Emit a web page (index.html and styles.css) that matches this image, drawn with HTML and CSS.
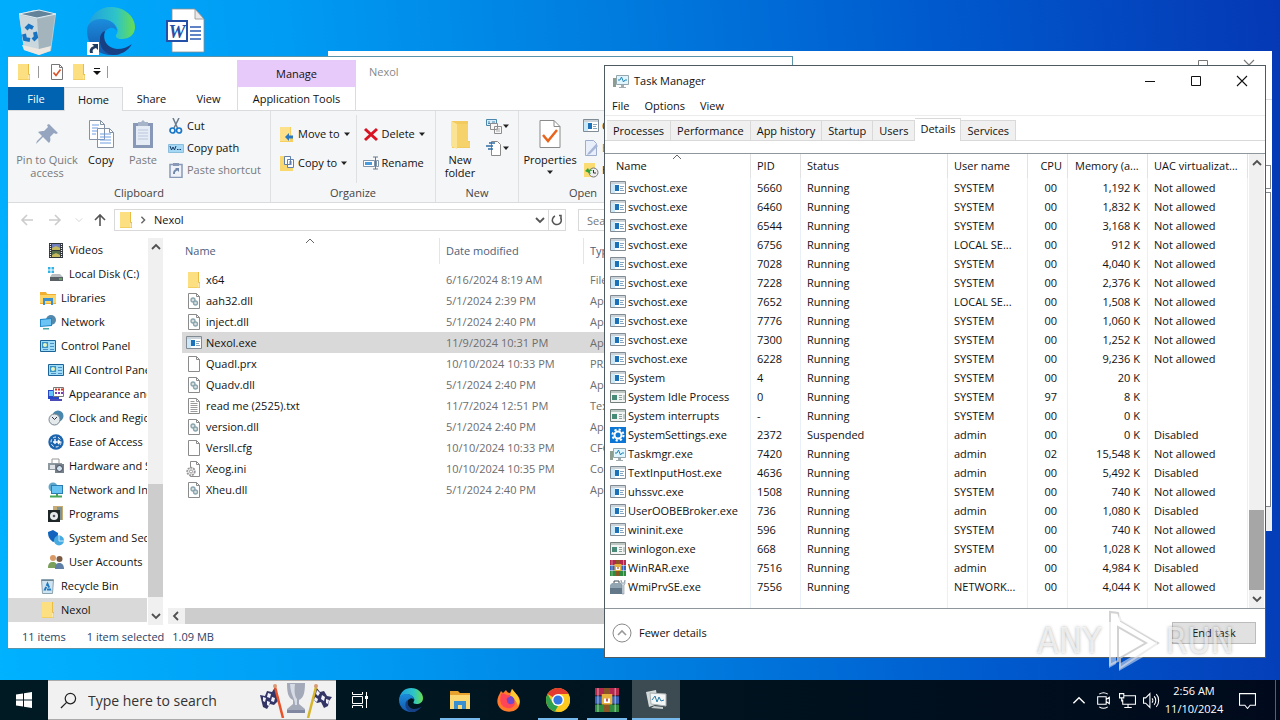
FILE: index.html
```html
<!DOCTYPE html>
<html lang="en">
<head>
    <meta charset="UTF-8">
    <meta name="viewport" content="width=device-width, initial-scale=1.0">
    <title>Desktop</title>
    <link rel="stylesheet" href="styles.css">
</head>
<body>
    <!-- icon sprite -->
    <svg class="sprite" aria-hidden="true">
        <symbol id="i-folder" viewBox="0 0 16 16"><path d="M2 0h11v10h1v6H2z" fill="#e9bd45"/><path d="M2 0h10v15.500H2z" fill="#fcdf80"/><path d="M12 10.500l1.500 1v4H12z" fill="#fbe9ac"/></symbol>
        <symbol id="i-bigfolder" viewBox="0 0 24 30"><path d="M4 2h16v20h2v7H4z" fill="#f3ca5e"/><path d="M3 2l6 3v25l-6-3z" fill="#fbe394"/><path d="M9 5h11v18l2 1v4H9z" fill="#f6d26b"/></symbol>
        <symbol id="i-check" viewBox="0 0 16 16"><path d="M2.500.5h8l3 3v12h-11z" fill="#fff" stroke="#777"/><path d="M10.500.5v3h3" fill="none" stroke="#777"/><path d="M4.500 8.500l2.500 3 4.500-6" fill="none" stroke="#d9532c" stroke-width="1.700"/></symbol>
        <symbol id="i-bigcheck" viewBox="0 0 24 30"><path d="M2 1.500h14l6 6v21H2z" fill="#fff" stroke="#8a8a8a"/><path d="M16 1.500v6h6" fill="none" stroke="#8a8a8a"/><path d="M5 16l5 6 9-11" fill="none" stroke="#e8641b" stroke-width="2.500"/></symbol>
        <symbol id="i-pin" viewBox="0 0 24 30"><path d="M14 5l9 9-2 1-2-1-4 4c1 3 0 5-1 6l-6-6-6 6-1 1 1-3 5-5-4-4c2-1 4-1 6-1l4-4-1-2z" fill="#95a5bf"/></symbol>
        <symbol id="i-copy" viewBox="0 0 28 30"><g fill="#fff" stroke="#8492a6"><path d="M2.500 1.500h11l4 4v15h-15zM10.500 9.500h12l4 4v15h-16z"/><path d="M13.500 1.500v4h4M22.500 9.500v4h4" fill="none"/></g><path d="M5 6h7M5 9h6M5 12h5M5 15h4M13 15h11M13 18h11M13 21h11M13 24h11" stroke="#6f9de0"/></symbol>
        <symbol id="i-paste" viewBox="0 0 24 30"><path d="M2 4h20v25H2z" fill="#8899b8"/><path d="M5 7h14v19H5z" fill="#e6ecf5"/><path d="M7 3h3l2-2 2 2h3v4H7z" fill="#a6b3c9"/><path d="M7 11h10M7 14h10M7 17h10M7 20h10" stroke="#b8c6dc"/></symbol>
        <symbol id="i-cut" viewBox="0 0 16 16"><path d="M5 0l4.500 10M11 0L6 10" stroke="#6b7c8e" stroke-width="1.500"/><circle cx="4.500" cy="12.500" r="2.500" fill="none" stroke="#1977c9" stroke-width="1.700"/><circle cx="11" cy="12.500" r="2.500" fill="none" stroke="#1977c9" stroke-width="1.700"/></symbol>
        <symbol id="i-path" viewBox="0 0 16 16"><path d="M.5 4.500h15v8H.5z" fill="#a5d8f5" stroke="#8bbedd"/><path d="M2 6l1.500 4L5 7l1.500 3L8 6M9 9.500h1.500M11.500 9.500H13" fill="none" stroke="#163b66"/></symbol>
        <symbol id="i-shortcut" viewBox="0 0 16 16"><path d="M2 2.500h12v13H2z" fill="#eef2f8" stroke="#8899b8" stroke-width="1.500"/><path d="M5 1h6v3H5z" fill="#8899b8"/><path d="M5 12c0-3 1-4 3-5L7 6h4v4l-1.500-1.500C7 9.500 7 10 7 12z" fill="#7186ab"/></symbol>
        <symbol id="i-move" viewBox="0 0 16 16"><path d="M1 1h11v10h2v5H1z" fill="#f6cf5f"/><path d="M1 1h10v14H1z" fill="#fce08a"/><path d="M6 11l4-4v2.500h4v3h-4V15z" fill="#2a78c2"/></symbol>
        <symbol id="i-copyto" viewBox="0 0 16 16"><path d="M1 1h11v10h2v5H1z" fill="#f9d96f"/><path d="M5.500 1.500h6v8h-6zM8.500 4.500h6v8h-6z" fill="#fff" stroke="#5f7fae"/><path d="M10 7h3M10 9h3" stroke="#5f7fae"/></symbol>
        <symbol id="i-delete" viewBox="0 0 16 16"><path d="M2 3l12 11M14 3L2 14" stroke="#d81324" stroke-width="3"/></symbol>
        <symbol id="i-rename" viewBox="0 0 16 16"><path d="M.5 5.500h11v6H.5zM13.500 5.500h2v6h-2z" fill="#fff" stroke="#8094aa"/><path d="M2 7h7v3H2z" fill="#4a9bdc"/><path d="M10 2h5M12.500 2v12M10 14h5" stroke="#66788c"/></symbol>
        <symbol id="i-newitem" viewBox="0 0 16 16"><path d="M.5 1.500h10v6H.5z" fill="#d9edfa" stroke="#4b86ad"/><path d="M2 4h2M6 4h3M2 5.500h7" stroke="#4b86ad"/><path d="M4.500 5.500h7v6h-7zM8.500 8.500h7v7h-7z" fill="#f7f7f7" stroke="#8d8d8d"/><path d="M10 11h4M10 13h4" stroke="#aaa"/></symbol>
        <symbol id="i-easy" viewBox="0 0 16 16"><path d="M5.500 1.500h6l3 3v11h-9z" fill="#fff" stroke="#8a8a8a"/><path d="M3 3h6M0 6h7M2 9h5" stroke="#2e6ea5" stroke-width="1.500"/></symbol>
        <symbol id="i-edit" viewBox="0 0 16 16"><path d="M2.500.5h8l3 3v12h-11z" fill="#e8eefa" stroke="#9fadcc"/><path d="M5 13l8-9 2 2-8 8-3 1z" fill="#a7b6d7"/></symbol>
        <symbol id="i-history" viewBox="0 0 16 16"><path d="M1 1h11v14H1z" fill="#fbdc73"/><circle cx="10.500" cy="10.500" r="4.500" fill="#eee" stroke="#777"/><path d="M10.500 8v3h2.500" fill="none" stroke="#333"/><path d="M2 9l3-3 1 2c2-1 3 0 4 1-2-.5-3 0-3 1l1 2z" fill="#36a23a"/></symbol>
        <symbol id="i-exe" viewBox="0 0 16 16"><path d="M.5 1.500h15v12H.5z" fill="#fff" stroke="#808b93"/><path d="M1 2h14v2H1z" fill="#cdd4d9"/><path d="M1 4h4v9H1z" fill="#cbe8f9"/><path d="M5 5h4v6H5z" fill="#1c72b8"/><path d="M10 6.500h4M10 8.500h3M10 10.500h4" stroke="#86a5c0"/></symbol>
        <symbol id="i-exe2" viewBox="0 0 16 16"><path d="M.5 1.500h15v12H.5z" fill="#f2f4f3" stroke="#737f7b"/><path d="M1 2h14v2H1z" fill="#bcc6c2"/><path d="M2 6h5v5H2z" fill="#478a78"/><path d="M9 6.500h3M9 8.500h3M9 10.500h3M14 6v5" stroke="#8ba49c"/></symbol>
        <symbol id="i-doc" viewBox="0 0 16 16"><path d="M2.500.5h8l3 3v12h-11z" fill="#fff" stroke="#8b8b8b"/><path d="M10.500.5v3h3" fill="none" stroke="#8b8b8b"/></symbol>
        <symbol id="i-txt" viewBox="0 0 16 16"><path d="M2.500.5h8l3 3v12h-11z" fill="#fff" stroke="#8b8b8b"/><path d="M10.500.5v3h3M4.500 3.500h4M4.500 5.500h7M4.500 7.500h7M4.500 9.500h7M4.500 11.500h7M4.500 13.500h7" fill="none" stroke="#9b9b9b"/></symbol>
        <symbol id="i-dll" viewBox="0 0 16 16"><path d="M2.500.5h8l3 3v12h-11z" fill="#fff" stroke="#8b8b8b"/><path d="M10.500.5v3h3" fill="none" stroke="#8b8b8b"/><circle cx="7" cy="7" r="2" fill="#d5dfe2" stroke="#8ba5ae" stroke-width="1.300"/><circle cx="9.500" cy="10" r="2" fill="#d5dfe2" stroke="#8ba5ae" stroke-width="1.300"/></symbol>
        <symbol id="i-ini" viewBox="0 0 16 16"><path d="M4.500.5h6l3 3v12h-9z" fill="#fff" stroke="#8b8b8b"/><path d="M10.500.5v3h3" fill="none" stroke="#8b8b8b"/><circle cx="5" cy="10.500" r="3.800" fill="#eee" stroke="#999" stroke-width="1.800" stroke-dasharray="2 .8"/><circle cx="5" cy="10.500" r="1.500" fill="#fff" stroke="#999"/></symbol>
        <symbol id="i-video" viewBox="0 0 16 16"><path d="M1 1h14v15H1z" fill="#30343b"/><path d="M4 2h8v6H4z" fill="#6f7fc0"/><path d="M4 9h8v6H4z" fill="#55704a"/><path d="M4 6l4-2 4 2v2H4zM4 13l4-2 4 2v2H4z" fill="#c5b95e"/><path d="M2.500 2v13M13.500 2v13" stroke="#eee" stroke-width="1.200" stroke-dasharray="1 1"/></symbol>
        <symbol id="i-disk" viewBox="0 0 16 16"><path d="M0 1h2.500v2.500H0zM3.500 1H6v2.500H3.500zM0 4.500h2.500V7H0zM3.500 4.500H6V7H3.500z" fill="#31b2e6"/><path d="M4 8h8l3 3H2z" fill="#b9bec2"/><path d="M2 11h13v4H2z" fill="#5a6166"/><path d="M11 13h3" stroke="#6fe36c"/></symbol>
        <symbol id="i-lib" viewBox="0 0 16 16"><path d="M0 2h6l1 2h9v10H0z" fill="#f2ae2e"/><path d="M0 5h16v8H0z" fill="#fcd568"/><path d="M3 8h10v7h-2v-4H5v4H3z" fill="#3d90cf"/></symbol>
        <symbol id="i-network" viewBox="0 0 16 16"><circle cx="11" cy="6" r="5" fill="#5589ab"/><path d="M0 5l12-1v8L0 13z" fill="#2187c6"/><path d="M1 6l10-1v6L1 12z" fill="#6cc4f4"/><path d="M3 14h6v1.500H3z" fill="#4ba6a5"/></symbol>
        <symbol id="i-control" viewBox="0 0 16 16"><path d="M.5 2.500h15v11H.5z" fill="#9fdcf7" stroke="#1c6497"/><path d="M2 4h6v6H2z" fill="#3a93c5"/><circle cx="5" cy="7" r="2" fill="#e5f3bd"/><path d="M10 5.500h4M10 8.500h4M3 11.500h5M10 11.500h4" stroke="#4c8fc0"/></symbol>
        <symbol id="i-appear" viewBox="0 0 16 16"><path d="M0 4h11v9H0z" fill="#2946c6"/><path d="M1 5h8v5H1z" fill="#66c3fa"/><path d="M5.500 1.500h10v9h-10z" fill="#fff" stroke="#777"/><path d="M7 3.500h2M10 3.500h2M13 3.500h2" stroke="#d73220" stroke-width="2"/><path d="M7 7h2M10 7h2M13 7h2" stroke="#7b3fb5" stroke-width="2"/><path d="M2 14h12" stroke="#4b4bb5" stroke-width="2"/></symbol>
        <symbol id="i-clock" viewBox="0 0 16 16"><circle cx="10" cy="6" r="5.500" fill="#4a87ac"/><circle cx="6.500" cy="9.500" r="5.500" fill="#e4e9ec" stroke="#77858f"/><path d="M4 7l2.500 2.500L9 7" fill="none" stroke="#334"/></symbol>
        <symbol id="i-ease" viewBox="0 0 16 16"><circle cx="8" cy="8" r="7.700" fill="#1c64ae"/><circle cx="8" cy="8" r="5" fill="none" stroke="#fff" stroke-dasharray="3 2"/><path d="M5 8h7M10 6l2 2-2 2M7 5v5" fill="none" stroke="#fff" stroke-width="1.400"/></symbol>
        <symbol id="i-hw" viewBox="0 0 16 16"><path d="M4 1h7v5H4z" fill="#fff" stroke="#999"/><path d="M0 5h14v7H0z" fill="#8d989f"/><path d="M2 7h5v4H2z" fill="#dde3e7"/><path d="M7 6h9v9H7z" fill="#75828c"/><circle cx="11.500" cy="10.500" r="3" fill="#cfe2ee" stroke="#445"/></symbol>
        <symbol id="i-netint" viewBox="0 0 16 16"><circle cx="5" cy="5" r="4.500" fill="#5ea6cb"/><path d="M3 3h12v9H3z" fill="#2b7db1"/><path d="M4 4h10v7H4z" fill="#67c3f1"/><path d="M2 14.500h12M9 12v2" stroke="#47a555" stroke-width="2"/></symbol>
        <symbol id="i-prog" viewBox="0 0 16 16"><path d="M5 0h10v14H5z" fill="#c8aa73"/><path d="M9 1h5v13H9z" fill="#819494"/><path d="M0 4h12v12H0z" fill="#1f2628"/><circle cx="6" cy="10" r="4" fill="#e7ebeb"/><circle cx="6" cy="10" r="1.300" fill="#556"/></symbol>
        <symbol id="i-sys" viewBox="0 0 16 16"><path d="M0 2l5-2 5 3c0 5-2 8-5 9C1 9 0 6 0 2z" fill="#1164bd"/><circle cx="11" cy="10.500" r="5" fill="#47aae0"/><path d="M11 6v5h5" fill="none" stroke="#c6ecff"/></symbol>
        <symbol id="i-users" viewBox="0 0 16 16"><circle cx="5" cy="4" r="3" fill="#d99a65"/><path d="M0 14c0-5 2-6 5-6s4 2 4 6z" fill="#7ba05b"/><circle cx="11.500" cy="5" r="3" fill="#7a5a42"/><path d="M7 15c0-5 2-6 4.500-6s4.500 2 4.500 6z" fill="#5f7fa6"/></symbol>
        <symbol id="i-bin" viewBox="0 0 16 16"><path d="M1.500 1.500h12l-1 14h-10z" fill="#cfe4f1" stroke="#8ba2b0"/><path d="M1.500 2.500h12" stroke="#6f8794"/><path d="M7.500 6l2.500 5.500H5z" fill="none" stroke="#2079c0" stroke-width="2" stroke-dasharray="4 1"/></symbol>
        <symbol id="i-gear" viewBox="0 0 16 16"><path d="M0 0h16v16H0z" fill="#0b76d4"/><circle cx="8" cy="8" r="3.500" fill="none" stroke="#fff" stroke-width="2"/><circle cx="8" cy="8" r="5.500" fill="none" stroke="#fff" stroke-width="2" stroke-dasharray="2.160 2.160"/></symbol>
        <symbol id="i-taskmgr" viewBox="0 0 16 16"><path d="M0 5h3v9H0z" fill="#8d9d90"/><path d="M3.500 2.500h12v9h-12z" fill="#e0f5fd" stroke="#95a6ad"/><path d="M5 7h2l1.500-3 2 5 1.500-2h2" fill="none" stroke="#2286b9"/><path d="M8 12h3v2H8zM6 14h7v1H6z" fill="#a3adb1"/></symbol>
        <symbol id="i-rar" viewBox="0 0 16 16"><path d="M0 0h16v5H0z" fill="#b3284c"/><path d="M0 5.500h16v5H0z" fill="#3a63b5"/><path d="M0 11h16v5H0z" fill="#2f8c3e"/><path d="M6 0h4v16H6z" fill="#8c5526"/><path d="M4.500 4h7v7h-7z" fill="#e8b33c"/><path d="M6 7h4v3H6z" fill="#fff"/><path d="M7.500 7h1v2h-1z" fill="#a4282b"/><path d="M2 0v16M13.500 0v16" stroke="#fff" opacity=".4"/></symbol>
        <symbol id="i-tools" viewBox="0 0 16 16"><path d="M0 6h13v9H0z" fill="#637888"/><path d="M0 6l2-2h9l2 2v3H0z" fill="#91a5b3"/><path d="M4 4V2h5v2" fill="none" stroke="#43515b"/><path d="M11 1v4l1 1v9h2V6l1-1V1l-1 3h-2z" fill="#ced9e0" stroke="#6e7f8c" stroke-width=".5"/></symbol>
        <symbol id="i-edge" viewBox="0 0 48 48"><linearGradient id="edge-top" x1="0" x2="1"><stop offset="0" stop-color="#1fa0e0"/><stop offset=".6" stop-color="#2ec4c8"/><stop offset="1" stop-color="#68de4f"/></linearGradient><linearGradient id="edge-left" x1="0" y1="0" x2="0" y2="1"><stop offset="0" stop-color="#1b8ddc"/><stop offset="1" stop-color="#1457ac"/></linearGradient><path d="M1 20C3 8 12 0 24 0c14 0 24 10 24 20 0 8-6 12-13 12-5 0-7-2-6-4 2-3 2-5 1-7-2-5-8-9-15-8C9 13 4 16 1 20z" fill="url(#edge-top)"/><path d="M0 24c0-8 6-12 14-12 8 0 15 4 16 12-2-3-5-4-7-3-6 2-8 8-5 14 3 7 9 11 16 12-4 1-7 1-10 1C11 48 0 38 0 24z" fill="url(#edge-left)"/><path d="M18 24c-3 9 2 17 12 18 6 0 11-2 15-5-4 7-11 11-19 11-9-1-14-9-13-16 0-4 2-7 5-8z" fill="#173f83"/></symbol>
        <symbol id="i-down" viewBox="0 0 8 8"><path d="M1 2.500h6L4 6z" fill="#222"/></symbol>
        <symbol id="i-chev" viewBox="0 0 10 10"><path d="M1 3l4 4 4-4" fill="none" stroke="currentColor" stroke-width="1.800"/></symbol>
        <symbol id="i-thin" viewBox="0 0 10 10"><path d="M1 3l4 4 4-4" fill="none" stroke="currentColor"/></symbol>
        <symbol id="i-arrow" viewBox="0 0 14 14"><path d="M13 7H2M7 2L2 7l5 5" fill="none" stroke="currentColor" stroke-width="1.600"/></symbol>
        <symbol id="i-min" viewBox="0 0 12 12"><path d="M1 6.500h10" stroke="currentColor"/></symbol>
        <symbol id="i-max" viewBox="0 0 12 12"><path d="M1.500 1.500h9v9h-9z" fill="none" stroke="currentColor"/></symbol>
        <symbol id="i-close" viewBox="0 0 12 12"><path d="M1 1l10 10M11 1L1 11" stroke="currentColor" stroke-width="1.100"/></symbol>
    </svg>

    <main class="desktop">
        <div class="shortcuts">
            <a href="#" aria-label="Recycle Bin">
                <svg viewBox="0 0 48 48"><path d="M6 7l15-4 22 4-5 37-12 4-15-5z" fill="#b9cbd5"/><path d="M6 7l18 4 19-4-17-4z" fill="#62839a" stroke="#e1edf2"/><path d="M24 12l18-4-5 36-11 3z" fill="#a3b4bd"/><path d="M6 8l18 4 2 35-15-5z" fill="#cad7dd"/><path d="M9 38l17 4 12-3-1 5-11 4-15-5z" fill="#ece7e1"/><path d="M13 22l3-3 4 2M22 25l1 5-3 3M17 33l-5-1-1-5" fill="none" stroke="#1673c2" stroke-width="4"/></svg>
            </a>
            <a href="#" aria-label="Microsoft Edge">
                <svg viewBox="0 0 48 48"><use href="#i-edge"/><path d="M0 35h12v13H0z" fill="#fff"/><path d="M3 46c-1-4 1-6 4-7l-2-2h6v6l-2-2c-3 1-4 2-3 5z" fill="#1f3a5f"/></svg>
            </a>
            <a href="#" aria-label="Word document">
                <svg viewBox="0 0 48 48"><path d="M11 2h23l9 10v33H11z" fill="#fff" stroke="#8d8d8d" stroke-width=".8"/><path d="M34 2v10h9z" fill="#e9e9e9" stroke="#8d8d8d" stroke-width=".8"/><path d="M29 20h11M29 24h11M29 28h11M29 32h11" stroke="#2b5bb1" stroke-width="1.300"/><path d="M6 14h20v20H6z" fill="#fff" stroke="#2450a8" stroke-width="2"/><text x="16" y="31" text-anchor="middle" class="word-letter">W</text></svg>
            </a>
        </div>

        <!-- window at the back -->
        <section class="window back-window" aria-label="Background window">
            <div class="caption">
                <button aria-label="Minimize"><svg><use href="#i-min"/></svg></button>
                <button aria-label="Maximize"><svg><use href="#i-max"/></svg></button>
                <button aria-label="Close"><svg><use href="#i-close"/></svg></button>
            </div>
            <div class="back-ribbon"></div>
            <div class="back-address"></div>
            <div class="back-list"></div>
            <div class="back-status"></div>
        </section>

        <!-- file explorer -->
        <section class="window explorer" aria-label="Nexol">
            <header class="ex-title">
                <div class="quick">
                    <svg class="icon"><use href="#i-folder"/></svg><i></i>
                    <svg class="icon"><use href="#i-check"/></svg>
                    <svg class="icon"><use href="#i-folder"/></svg>
                    <svg class="customize" viewBox="0 0 8 10"><path d="M1 1.500h6" stroke="#111"/><path d="M0 4h8L4 8z" fill="#111"/></svg><i></i>
                </div>
                <div class="manage">Manage</div>
                <div class="ex-name">Nexol</div>
            </header>
            <nav class="ex-tabs">
                <button class="tab-file">File</button>
                <button class="tab-home">Home</button>
                <button class="tab">Share</button>
                <button class="tab">View</button>
                <button class="tab-tools">Application Tools</button>
            </nav>
            <div class="ribbon">
                <div class="group clipboard">
                    <div class="tools">
                        <button class="big pin dim"><svg><use href="#i-pin"/></svg><span>Pin to Quick<br>access</span></button>
                        <button class="big copy"><svg><use href="#i-copy"/></svg><span>Copy</span></button>
                        <button class="big paste dim"><svg><use href="#i-paste"/></svg><span>Paste</span></button>
                        <div class="stack">
                            <button><svg class="icon"><use href="#i-cut"/></svg>Cut</button>
                            <button><svg class="icon"><use href="#i-path"/></svg>Copy path</button>
                            <button class="dim"><svg class="icon"><use href="#i-shortcut"/></svg>Paste shortcut</button>
                        </div>
                    </div>
                    <div class="group-name">Clipboard</div>
                </div>
                <div class="group organize">
                    <div class="tools">
                        <div class="stack wide">
                            <button><svg class="icon"><use href="#i-move"/></svg>Move to<svg class="down"><use href="#i-down"/></svg></button>
                            <button><svg class="icon"><use href="#i-copyto"/></svg>Copy to<svg class="down"><use href="#i-down"/></svg></button>
                        </div>
                        <div class="stack wide ruled">
                            <button><svg class="icon"><use href="#i-delete"/></svg>Delete<svg class="down"><use href="#i-down"/></svg></button>
                            <button><svg class="icon"><use href="#i-rename"/></svg>Rename</button>
                        </div>
                    </div>
                    <div class="group-name">Organize</div>
                </div>
                <div class="group new">
                    <div class="tools">
                        <button class="big"><svg><use href="#i-bigfolder"/></svg><span>New<br>folder</span></button>
                        <div class="stack">
                            <button aria-label="New item"><svg class="icon"><use href="#i-newitem"/></svg><svg class="down"><use href="#i-down"/></svg></button>
                            <button aria-label="Easy access"><svg class="icon"><use href="#i-easy"/></svg><svg class="down"><use href="#i-down"/></svg></button>
                        </div>
                    </div>
                    <div class="group-name">New</div>
                </div>
                <div class="group open">
                    <div class="tools">
                        <button class="big"><svg><use href="#i-bigcheck"/></svg><span>Properties</span><svg class="down"><use href="#i-down"/></svg></button>
                        <div class="stack">
                            <button><svg class="icon"><use href="#i-exe"/></svg>Open</button>
                            <button class="dim"><svg class="icon"><use href="#i-edit"/></svg>Edit</button>
                            <button><svg class="icon"><use href="#i-history"/></svg>History</button>
                        </div>
                    </div>
                    <div class="group-name">Open</div>
                </div>
            </div>
            <div class="address-row">
                <button class="off" aria-label="Back"><svg><use href="#i-arrow"/></svg></button>
                <button class="off" aria-label="Forward"><svg class="flip"><use href="#i-arrow"/></svg></button>
                <button class="off recent" aria-label="Recent"><svg><use href="#i-thin"/></svg></button>
                <button class="up" aria-label="Up"><svg><use href="#i-arrow"/></svg></button>
                <div class="address">
                    <svg class="icon"><use href="#i-folder"/></svg>
                    <svg class="crumb"><use href="#i-chev"/></svg>
                    <a href="#">Nexol</a>
                    <button aria-label="Previous locations"><svg><use href="#i-chev"/></svg></button>
                    <button class="refresh" aria-label="Refresh"><svg viewBox="0 0 12 12"><path d="M8 1.500h2v4M9.500 3.500A4.500 4.500 0 1 1 4 2" fill="none" stroke="#555" stroke-width="1.500"/></svg></button>
                </div>
                <input class="ex-search" type="text" aria-label="Search Nexol" placeholder="Search Nexol">
            </div>
            <div class="ex-body">
                <ul class="tree" id="tree"></ul>
                <div class="scroll tree-scroll"><svg class="flip-v"><use href="#i-chev"/></svg><b></b><svg><use href="#i-chev"/></svg></div>
                <div class="files">
                    <table>
                        <thead>
                            <tr><th class="f-name">Name<svg class="sort"><use href="#i-thin"/></svg></th><th class="f-date">Date modified</th><th>Type</th></tr>
                        </thead>
                        <tbody id="files"></tbody>
                    </table>
                    <div class="h-scroll"><svg><use href="#i-chev"/></svg><b></b></div>
                </div>
            </div>
            <footer class="ex-status"><span>11 items</span><span>1 item selected</span><span>1.09 MB</span></footer>
        </section>

        <!-- task manager -->
        <section class="window taskmgr" aria-label="Task Manager">
            <header class="tm-title">
                <svg class="icon"><use href="#i-taskmgr"/></svg>
                <h1>Task Manager</h1>
                <div class="caption">
                    <button aria-label="Minimize"><svg><use href="#i-min"/></svg></button>
                    <button aria-label="Maximize"><svg><use href="#i-max"/></svg></button>
                    <button aria-label="Close"><svg><use href="#i-close"/></svg></button>
                </div>
            </header>
            <nav class="tm-menu"><button>File</button><button>Options</button><button>View</button></nav>
            <nav class="tm-tabs">
                <button>Processes</button><button>Performance</button><button>App history</button><button>Startup</button><button>Users</button><button class="active">Details</button><button>Services</button>
            </nav>
            <div class="tm-list">
                <table>
                    <colgroup><col class="c-name"><col class="c-pid"><col class="c-status"><col class="c-user"><col class="c-cpu"><col class="c-mem"><col class="c-uac"></colgroup>
                    <thead>
                        <tr><th>Name<svg class="sort"><use href="#i-thin"/></svg></th><th>PID</th><th>Status</th><th>User name</th><th class="h-cpu">CPU</th><th>Memory (a...</th><th>UAC virtualizat...</th></tr>
                    </thead>
                    <tbody id="processes"></tbody>
                </table>
                <div class="scroll tm-scroll"><svg class="flip-v"><use href="#i-chev"/></svg><b></b><svg><use href="#i-chev"/></svg></div>
            </div>
            <footer class="tm-footer">
                <button class="fewer"><svg viewBox="0 0 20 20"><circle cx="10" cy="10" r="9" fill="none" stroke="#888"/><path d="M6 12l4-4 4 4" fill="none" stroke="#999" stroke-width="1.600"/></svg>Fewer details</button>
                <button class="end-task">End task</button>
            </footer>
        </section>

        <div class="watermark">
            <span>ANY</span>
            <svg viewBox="0 0 54 62"><path d="M3 2v53l8-4V17l28 16-26 15v10L51 33 14 11l-3-8z" fill="none" stroke="#c8c8c8" stroke-width="2"/><path d="M12 3l38 22v7L12 10zM2 12h7v42l-7 4zM12 54l38-22v7L12 61z" fill="#fff" fill-opacity=".6"/></svg>
            <span>RUN</span>
        </div>
    </main>

    <footer class="taskbar">
        <button class="start" aria-label="Start"><svg viewBox="0 0 16 16"><path d="M0 2.500l7-1v6H0zM8 1.300L16 0v7.500H8zM0 8.500h7v6l-7-1zM8 8.500h8V16l-8-1.300z" fill="#fff"/></svg></button>
        <div class="search">
            <svg class="lens" viewBox="0 0 18 18"><circle cx="11" cy="7" r="5.500" fill="none" stroke="#222" stroke-width="1.300"/><path d="M7 11l-6 6" stroke="#222" stroke-width="1.300"/></svg>
            <input type="text" aria-label="Search" placeholder="Type here to search">
            <svg class="cup" viewBox="0 0 72 36"><g fill="#333566"><path d="M0 13l5 1 2-5 5 1 3-5 3 14-4 4-4-1-3 5-4-2-1-4z"/><path d="M72 15l-5-1-3-5-4 1-4-5-3 12 4 4 4-1 3 6 4-2 1-5z"/></g><path d="M3 15l3 1-1 4-2-1zM8 11l3 1-1 4-3-1zM7 19l3 1-1 4-2-1zM12 15l3 1-1 4-3-1zM57 8l3 3-2 3-2-2zM62 13l3 2-1 4-3-2zM55 15l3 2-1 3-3-2zM66 17l3 1-1 4-2-1z" fill="#f4f3fb"/><path d="M15 5l8 31" stroke="#e8532a" stroke-width="2.500"/><path d="M56 5l-8 31" stroke="#d7b52a" stroke-width="2.500"/><circle cx="15" cy="4" r="2" fill="#d99a73"/><circle cx="56" cy="4" r="2" fill="#d99a73"/><path d="M27 1h18c0 11-2 15-6 17v4l6 5v3H27v-3l6-5v-4c-5-2-6-8-6-17z" fill="#a3a9b8"/><path d="M30 2h5c-1 8 0 13 2 15v6h-2c0-8-4-8-5-21z" fill="#d6dbe5"/><path d="M27 28h18v3H27z" fill="#8087a0"/></svg>
        </div>
        <div class="pinned">
            <button aria-label="Task View"><svg class="view" viewBox="0 0 18 16"><path d="M1.500 4.500h10v7h-10zM1.500 0v2.500h10V0M1.500 16v-2.500h10V16M15.500 0v4M15.500 7v9" fill="none" stroke="#fff"/><path d="M14 4h3v3h-3z" fill="#fff"/></svg></button>
            <button class="first" aria-label="Microsoft Edge"><svg><use href="#i-edge"/></svg></button>
            <button class="running" aria-label="File Explorer"><svg viewBox="0 0 24 24"><path d="M2 3h8l2 2h10v16H2z" fill="#e8a22e"/><path d="M2 7h20v14H2z" fill="#fcd872"/><path d="M6 13h12v8h-4v-4h-4v4H6z" fill="#3a8fd0"/></svg></button>
            <button aria-label="Firefox"><svg viewBox="0 0 24 24"><path d="M2 7l2-4 2 2 3-3c1 2 2 3 4 3l2-4 5 6c3 3 4 7 2 11-3 7-13 7-18 3C-.5 17-.5 12 2 7z" fill="#ff7a29"/><path d="M15 1l5 6c3 4 3 8 1 11-2-6-5-9-8-10z" fill="#ffc933"/><circle cx="12" cy="13" r="5.500" fill="#7747c9"/><path d="M4 6c2-1 4 0 6 1 2 0 3 1 3 2-2 0-4 1-3 4 0 3 5 5 8 1 0 5-4 7-8 6-6-1-8-7-6-14z" fill="#ff4557"/></svg></button>
            <button class="running" aria-label="Chrome"><svg viewBox="0 0 24 24"><circle cx="12" cy="12" r="12" fill="#f8c920"/><path d="M12 12L1.600 6A12 12 0 0 1 22.400 6z" fill="#e33b2e"/><path d="M12 6h10.400A12 12 0 0 1 12 24l5-9z" fill="#fbc91f"/><path d="M1.600 6l5.200 9L12 18l-3 5.600A12 12 0 0 1 1.600 6z" fill="#2fa04d"/><circle cx="12" cy="12" r="6" fill="#fff"/><circle cx="12" cy="12" r="4.600" fill="#3276df"/></svg></button>
            <button class="running" aria-label="WinRAR"><svg><use href="#i-rar"/></svg></button>
            <button class="running current" aria-label="Task Manager"><svg viewBox="0 0 24 24"><path d="M2 4l10-2 2 14-9 3z" fill="#d4d9d9"/><path d="M6 5l16 1v12l-15-2z" fill="#f3f6f6" stroke="#abb1b2"/><path d="M8 12l3-4 2 6 2-5 2 4 3-1" fill="none" stroke="#287ba5"/><path d="M10 18l9 1v2l-12-1z" fill="#c5caca"/></svg></button>
        </div>
        <div class="tray">
            <button aria-label="Show hidden icons"><svg class="flip-v"><use href="#i-thin"/></svg></button>
            <button aria-label="Meet Now"><svg viewBox="0 0 16 16"><path d="M2.500 4.500h8v7h-8zM10.500 7l3-2v6l-3-2M4 2c3-2 5-2 8 0M4 14c3 2 5 2 8 0" fill="none" stroke="#fff"/></svg></button>
            <button aria-label="Network"><svg viewBox="0 0 16 16"><path d="M5 3.500h10.500v8H3.500V7M8.500 12v3M5 14.500h7M.5 1.500h4v4h-4zM2.500 5v4" fill="none" stroke="#fff"/></svg></button>
            <button aria-label="Volume"><svg viewBox="0 0 16 16"><path d="M.5 5.500h2l4-4v13l-4-4h-2zM8.500 6c1 1 1 3 0 4M10.500 4c2 2 2 6 0 8M12.500 2c3 3 3 9 0 12" fill="none" stroke="#fff"/></svg></button>
            <div class="clock"><time>2:56 AM</time><time>11/10/2024</time></div>
            <button class="notes" aria-label="Notifications"><svg viewBox="0 0 16 16"><path d="M.5 1.500h15v11h-5l-2.500 3-2.500-3h-5z" fill="none" stroke="#fff"/></svg></button>
            <button class="peek" aria-label="Show desktop"></button>
        </div>
    </footer>

    <script src="script.js"></script>
</body>
</html>
```

FILE: styles.css
```css
* {
    box-sizing: border-box;
}
body {
    margin: 0;
    height: 100vh;
    display: flex;
    flex-direction: column;
    overflow: hidden;
    font-family: "Open Sans", "Noto Sans", sans-serif;
    font-size: 11px;
    line-height: 14px;
    color: #111;
    background: linear-gradient(84deg, #00b2ff 0%, #009df4 25%, #007ddf 50%, #0059cd 75%, #0538b4 100%);
}
button {
    margin: 0;
    padding: 0;
    border: 0;
    background: none;
    font: inherit;
    color: inherit;
}
a {
    color: inherit;
    text-decoration: none;
}
svg {
    display: block;
    flex: none;
}
.sprite {
    position: absolute;
    width: 0;
    height: 0;
}
.icon {
    width: 16px;
    height: 16px;
}
.flip {
    transform: scaleX(-1);
}
.flip-v {
    transform: scaleY(-1);
}
.desktop {
    flex: 1;
    position: relative;
    min-height: 0;
}
.shortcuts {
    display: flex;
    gap: 26px;
    padding: 7px 13px;
}
.shortcuts svg {
    width: 48px;
    height: 48px;
}
.word-letter {
    font: italic bold 19px "Liberation Serif", serif;
    fill: #2450a8;
}

/* windows */
.window {
    position: absolute;
    display: flex;
    flex-direction: column;
    background: #fff;
}
.caption {
    display: flex;
    margin-left: auto;
}
.caption button {
    width: 46px;
    height: 28px;
    display: flex;
    align-items: center;
    justify-content: center;
}
.caption svg {
    width: 12px;
    height: 12px;
}
.back-window {
    left: 328px;
    top: 51px;
    width: 944px;
    height: 480px;
    color: #777;
}
.back-ribbon {
    height: 78px;
    margin-top: 20px;
    border-top: 1px solid #ddd;
}
.back-address {
    height: 24px;
    margin: 0 1px;
    margin-top: -12px;
    border: 1px solid #828790;
}
.back-list {
    flex: 1;
    margin: 3px 1px 0;
    border: 1px solid #828790;
}
.back-status {
    height: 24px;
    background: #f0f0f0;
}

/* explorer */
.explorer {
    left: 8px;
    top: 56px;
    width: 785px;
    height: 593px;
    border: 1px solid #5c93a8;
    border-left: 0;
}
.ex-title {
    display: flex;
    height: 30px;
}
.quick {
    width: 229px;
    display: flex;
    align-items: center;
    gap: 6px;
    padding-left: 8px;
}
.quick i {
    width: 1px;
    height: 12px;
    margin-right: 4px;
    background: #999;
}
.customize {
    width: 8px;
    height: 10px;
}
.manage {
    width: 119px;
    margin-top: 3px;
    line-height: 27px;
    text-align: center;
    background: #e8cafa;
}
.ex-name {
    padding-left: 13px;
    line-height: 30px;
    color: #888;
}
.ex-tabs {
    display: flex;
    height: 24px;
    border-bottom: 1px solid #dadbdc;
}
.ex-tabs button {
    width: 57px;
    height: 23px;
}
.ex-tabs .tab-file {
    width: 56px;
    background: #0063b1;
    color: #fff;
}
.ex-tabs .tab-home {
    width: 59px;
    height: 24px;
    background: #f5f6f7;
    border: 1px solid #dadbdc;
    border-bottom: 0;
}
.ex-tabs .tab-tools {
    width: 119px;
    border: 1px solid #e0d8e6;
    border-width: 0 1px;
}
.ribbon {
    display: flex;
    height: 92px;
    background: #f5f6f7;
    border-bottom: 1px solid #dadbdc;
    white-space: nowrap;
}
.group {
    display: flex;
    flex-direction: column;
    justify-content: space-between;
    padding: 4px 0 2px;
    border-right: 1px solid #dfe0e1;
}
.tools {
    display: flex;
    height: 68px;
}
.group-name {
    text-align: center;
    color: #444;
}
.clipboard {
    width: 263px;
}
.organize {
    width: 165px;
}
.new {
    width: 83px;
}
.open {
    width: 129px;
}
.big {
    display: flex;
    flex-direction: column;
    align-items: center;
    width: 42px;
    padding-top: 4px;
    line-height: 13px;
}
.big svg {
    width: 28px;
    height: 30px;
    margin-bottom: 4px;
}
.big .down {
    width: 8px;
    height: 8px;
    margin: 2px 0 0;
}
.pin {
    width: 72px;
    padding-left: 6px;
}
.dim {
    color: #77797b;
}
.stack {
    display: flex;
    flex-direction: column;
    padding-left: 4px;
}
.stack button {
    display: flex;
    align-items: center;
    gap: 3px;
    height: 22px;
}
.wide {
    padding: 4px 0 0 8px;
}
.wide button {
    height: 29px;
}
.ruled {
    margin-left: 5px;
    padding-left: 6px;
    border-left: 1px solid #dfe0e1;
}
.down {
    width: 8px;
    height: 8px;
}
.new .big {
    width: 48px;
}
.new .stack {
    padding-left: 2px;
}
.new .stack button {
    gap: 0;
}
.open .big {
    width: 62px;
}
.open .stack {
    padding-left: 2px;
}
.address-row {
    display: flex;
    align-items: center;
    height: 34px;
    padding: 0 8px 0 5px;
}
.address-row > button {
    display: flex;
    align-items: center;
    justify-content: center;
    width: 28px;
    height: 22px;
}
.address-row > button svg {
    width: 14px;
    height: 14px;
}
.address-row > .recent {
    width: 20px;
}
.address-row > .recent svg {
    width: 8px;
    height: 8px;
}
.address-row > .up {
    width: 25px;
    padding-right: 4px;
    color: #555;
}
.up svg {
    transform: rotate(90deg);
}
.off {
    color: #ccc;
}
.address {
    display: flex;
    align-items: center;
    width: 452px;
    height: 22px;
    padding-left: 3px;
    border: 1px solid #d9d9d9;
}
.address .crumb {
    width: 8px;
    height: 8px;
    margin: 0 7px 0 5px;
    transform: rotate(-90deg);
    color: #666;
}
.address a {
    flex: 1;
}
.address button {
    width: 17px;
    height: 20px;
    display: flex;
    align-items: center;
    justify-content: center;
    color: #555;
}
.address button svg {
    width: 10px;
    height: 10px;
}
.address .refresh {
    border-left: 1px solid #d9d9d9;
}
.address .refresh svg {
    width: 12px;
    height: 12px;
}
.ex-search {
    flex: 1;
    min-width: 0;
    height: 22px;
    margin-left: 12px;
    padding: 0 8px;
    border: 1px solid #d9d9d9;
    font: inherit;
}
.ex-search::placeholder {
    color: #777;
    opacity: 1;
}
.ex-body {
    flex: 1;
    display: flex;
    min-height: 0;
    padding-top: 1px;
}
.tree {
    width: 139px;
    margin: 0;
    padding: 0;
    list-style: none;
    overflow: hidden;
    white-space: nowrap;
}
.tree a {
    display: flex;
    align-items: center;
    gap: 5px;
    height: 24px;
    padding-left: 32px;
}
.tree .sub a {
    padding-left: 40px;
}
.tree .selected {
    background: #d9d9d9;
}
.scroll {
    display: flex;
    flex-direction: column;
    align-items: center;
    justify-content: space-between;
    width: 16px;
    background: #f0f0f0;
}
.scroll svg {
    width: 10px;
    height: 18px;
    color: #505050;
}
.scroll b {
    width: 100%;
    background: #cdcdcd;
}
.tree-scroll {
    width: 15px;
    margin: 0 1px;
}
.tree-scroll b {
    height: 113px;
    margin-top: auto;
    margin-bottom: 10px;
}
.files {
    flex: 1;
    display: flex;
    flex-direction: column;
    justify-content: space-between;
    margin-left: 4px;
}
.files table {
    width: 600px;
    margin-left: 14px;
    border-collapse: separate;
    border-spacing: 0;
    table-layout: fixed;
}
.files th {
    position: relative;
    height: 26px;
    padding: 0 0 0 6px;
    border-right: 1px solid #e5e5e5;
    font-weight: normal;
    text-align: left;
    color: #4c607a;
}
.files thead::after {
    content: "";
    display: block;
    height: 5px;
}
.files td {
    height: 21px;
    padding: 0 0 0 6px;
    color: #6d6d6d;
    white-space: nowrap;
}
.files .f-name {
    width: 258px;
    padding-left: 3px;
}
.files .f-date {
    width: 144px;
}
.files td:first-child {
    padding-left: 4px;
    color: #111;
}
.files a {
    display: flex;
    align-items: center;
    gap: 4px;
}
.files .selected td {
    background: #d9d9d9;
}
.sort {
    position: absolute;
    top: -2px;
    left: 50%;
    width: 10px;
    height: 10px;
    margin-left: -6px;
    transform: scaleY(-1);
    color: #666;
}
.h-scroll {
    display: flex;
    align-items: center;
    height: 16px;
    margin-bottom: 1px;
    background: #f0f0f0;
}
.h-scroll svg {
    width: 10px;
    height: 10px;
    margin: 0 4px 0 3px;
    transform: rotate(90deg);
    color: #505050;
}
.h-scroll b {
    flex: 1;
    height: 100%;
    background: #cdcdcd;
}
.ex-status {
    display: flex;
    height: 23px;
    padding-left: 14px;
    line-height: 23px;
    color: #2a3f66;
}
.ex-status span:nth-child(2) {
    margin: 0 8px 0 21px;
}

/* task manager */
.taskmgr {
    left: 604px;
    top: 65px;
    width: 662px;
    height: 593px;
    border: 1px solid #4f5b60;
}
.tm-title {
    display: flex;
    align-items: center;
    height: 30px;
    padding-left: 8px;
}
.tm-title h1 {
    margin: 0 0 0 5px;
    font-size: 11px;
    font-weight: normal;
}
.tm-menu {
    display: flex;
    gap: 15px;
    height: 20px;
    padding-left: 7px;
    border-bottom: 1px solid #ececec;
}
.tm-tabs {
    display: flex;
    align-items: flex-end;
    height: 25px;
    padding-left: 2px;
    border-bottom: 1px solid #d9d9d9;
}
.tm-tabs button {
    height: 20px;
    padding: 0 6px;
    background: #f0f0f0;
    border: 1px solid #d9d9d9;
    border-width: 1px 1px 0 0;
}
.tm-tabs .active {
    height: 23px;
    margin-bottom: -1px;
    padding: 0 5px 3px;
    background: #fff;
}
.tm-list {
    flex: 1;
    display: flex;
    justify-content: space-between;
    margin-top: 12px;
    padding: 0 1px;
    border: 1px solid #8e979c;
    border-width: 1px 0;
}
.tm-list table {
    width: 642px;
    border-collapse: separate;
    border-spacing: 0;
    table-layout: fixed;
}
.c-name {
    width: 145px;
}
.c-pid {
    width: 50px;
}
.c-status {
    width: 147px;
}
.c-user,
.c-mem {
    width: 80px;
}
.c-cpu {
    width: 40px;
}
.c-uac {
    width: 100px;
}
.tm-list th,
.tm-list td {
    position: relative;
    height: 19px;
    padding: 0 0 0 6px;
    border-right: 1px solid #e9f0f8;
    font-weight: normal;
    text-align: left;
    white-space: nowrap;
}
.tm-list th {
    height: 24px;
    border-color: #e2e2e2;
}
.tm-list th:first-child {
    padding-left: 10px;
}
.tm-list th:nth-child(6) {
    padding-left: 7px;
}
.tm-list td:first-child {
    padding-left: 4px;
}
.tm-list .h-cpu {
    padding: 0 5px 0 0;
    text-align: right;
}
.tm-list td:nth-child(5) {
    padding: 0 10px 0 0;
    text-align: right;
}
.tm-list td:nth-child(6) {
    padding: 0 7px 0 0;
    text-align: right;
}
.tm-list .filler td {
    height: 12px;
}
.proc {
    display: flex;
    align-items: center;
    gap: 2px;
}
.tm-scroll {
    width: 15px;
}
.tm-scroll b {
    height: 80px;
    margin-top: auto;
    background: #a6a6a6;
}
.tm-footer {
    display: flex;
    align-items: center;
    justify-content: space-between;
    height: 48px;
    padding: 0 9px 0 7px;
}
.fewer {
    display: flex;
    align-items: center;
    gap: 7px;
}
.fewer svg {
    width: 20px;
    height: 20px;
}
.end-task {
    width: 84px;
    height: 22px;
    background: #e1e1e1;
    border: 1px solid #bcbcbc;
}
.watermark {
    position: absolute;
    right: 46px;
    bottom: 8px;
    display: flex;
    align-items: center;
    gap: 5px;
    font: 35px "DejaVu Sans Condensed", "Liberation Sans", sans-serif;
    color: rgba(255, 255, 255, 0.7);
    text-shadow: 0 0 3px rgba(90, 90, 90, 0.6);
    opacity: 0.8;
    pointer-events: none;
}
.watermark svg {
    width: 54px;
    height: 62px;
}

/* taskbar */
.taskbar {
    display: flex;
    height: 40px;
    background: linear-gradient(90deg, #001a24, #00141f 50%, #000a1c);
    color: #fff;
}
.start {
    width: 48px;
    display: flex;
    align-items: center;
    justify-content: center;
}
.start svg {
    width: 16px;
    height: 16px;
}
.search {
    width: 288px;
    display: flex;
    align-items: center;
    padding-left: 12px;
    background: #f1f1f1;
    border: 1px solid #aaa;
    border-width: 1px 0;
}
.lens {
    width: 17px;
    height: 17px;
}
.search input {
    flex: 1;
    min-width: 0;
    padding: 0 0 0 11px;
    border: 0;
    background: none;
    font-family: inherit;
    font-size: 14px;
}
.search input::placeholder {
    color: #333;
    opacity: 1;
}
.cup {
    width: 72px;
    height: 36px;
    margin-right: 4px;
}
.pinned {
    display: flex;
    gap: 1px;
}
.pinned button {
    display: flex;
    align-items: center;
    justify-content: center;
    position: relative;
    width: 48px;
}
.pinned .first {
    margin-left: 2px;
}
.pinned svg {
    width: 24px;
    height: 24px;
}
.pinned .view {
    width: 18px;
    height: 16px;
}
.running::after {
    content: "";
    position: absolute;
    left: 4px;
    right: 4px;
    bottom: 0;
    height: 2px;
    background: #76b9ed;
}
.current {
    background: #3c4a52;
}
.current::after {
    left: 0;
    right: 0;
}
.tray {
    display: flex;
    align-items: center;
    margin-left: auto;
}
.tray button {
    display: flex;
    align-items: center;
    justify-content: center;
    width: 24px;
    height: 40px;
}
.tray svg {
    width: 17px;
    height: 17px;
}
.tray .flip-v {
    width: 14px;
}
.clock {
    display: flex;
    flex-direction: column;
    width: 62px;
    line-height: 18px;
    text-align: center;
}
.tray .notes {
    width: 44px;
}
.tray .peek {
    width: 5px;
    margin-left: 6px;
    border-left: 1px solid #59616c;
}
```

FILE: script.js
```javascript
const tree = [
    ['video', 'Videos', 1], ['disk', 'Local Disk (C:)', 1], ['lib', 'Libraries', 0], ['network', 'Network', 0],
    ['control', 'Control Panel', 0], ['control', 'All Control Panel Items', 1], ['appear', 'Appearance and Personalization', 1],
    ['clock', 'Clock and Region', 1], ['ease', 'Ease of Access', 1], ['hw', 'Hardware and Sound', 1],
    ['netint', 'Network and Internet', 1], ['prog', 'Programs', 1], ['sys', 'System and Security', 1],
    ['users', 'User Accounts', 1], ['bin', 'Recycle Bin', 0], ['folder', 'Nexol', 0]
];

const files = [
    ['folder', 'x64', '6/16/2024 8:19 AM', 'File folder'],
    ['dll', 'aah32.dll', '5/1/2024 2:39 PM', 'Application exten...'],
    ['dll', 'inject.dll', '5/1/2024 2:40 PM', 'Application exten...'],
    ['exe', 'Nexol.exe', '11/9/2024 10:31 PM', 'Application'],
    ['doc', 'Quadl.prx', '10/10/2024 10:33 PM', 'PRX File'],
    ['dll', 'Quadv.dll', '5/1/2024 2:40 PM', 'Application exten...'],
    ['txt', 'read me (2525).txt', '11/7/2024 12:51 PM', 'Text Document'],
    ['dll', 'version.dll', '5/1/2024 2:40 PM', 'Application exten...'],
    ['doc', 'Versll.cfg', '10/10/2024 10:33 PM', 'CFG File'],
    ['ini', 'Xeog.ini', '10/10/2024 10:35 PM', 'Configuration sett...'],
    ['dll', 'Xheu.dll', '5/1/2024 2:40 PM', 'Application exten...']
];

const S = 'SYSTEM', R = 'Running', N = 'Not allowed', D = 'Disabled';
const processes = [
    ['exe', 'svchost.exe', '5660', R, S, '00', '1,192', N],
    ['exe', 'svchost.exe', '6460', R, S, '00', '1,832', N],
    ['exe', 'svchost.exe', '6544', R, S, '00', '3,168', N],
    ['exe', 'svchost.exe', '6756', R, 'LOCAL SE...', '00', '912', N],
    ['exe', 'svchost.exe', '7028', R, S, '00', '4,040', N],
    ['exe', 'svchost.exe', '7228', R, S, '00', '2,376', N],
    ['exe', 'svchost.exe', '7652', R, 'LOCAL SE...', '00', '1,508', N],
    ['exe', 'svchost.exe', '7776', R, S, '00', '1,060', N],
    ['exe', 'svchost.exe', '7300', R, S, '00', '1,252', N],
    ['exe', 'svchost.exe', '6228', R, S, '00', '9,236', N],
    ['exe', 'System', '4', R, S, '00', '20', ''],
    ['exe2', 'System Idle Process', '0', R, S, '97', '8', ''],
    ['exe2', 'System interrupts', '-', R, S, '00', '0', ''],
    ['gear', 'SystemSettings.exe', '2372', 'Suspended', 'admin', '00', '0', D],
    ['taskmgr', 'Taskmgr.exe', '7420', R, 'admin', '02', '15,548', N],
    ['exe', 'TextInputHost.exe', '4636', R, 'admin', '00', '5,492', D],
    ['exe', 'uhssvc.exe', '1508', R, S, '00', '740', N],
    ['exe', 'UserOOBEBroker.exe', '736', R, 'admin', '00', '1,080', D],
    ['exe', 'wininit.exe', '596', R, S, '00', '740', N],
    ['exe2', 'winlogon.exe', '668', R, S, '00', '1,028', N],
    ['rar', 'WinRAR.exe', '7516', R, 'admin', '00', '4,984', D],
    ['tools', 'WmiPrvSE.exe', '7556', R, 'NETWORK...', '00', '4,044', N]
];

function icon(name) {
    return `<svg class="icon"><use href="#i-${name}"/></svg>`;
}

document.getElementById('tree').innerHTML = tree.map(([pic, name, sub]) =>
    `<li class="${sub ? 'sub' : ''} ${name === 'Nexol' ? 'selected' : ''}"><a href="#">${icon(pic)}${name}</a></li>`
).join('');

document.getElementById('files').innerHTML = files.map(([pic, name, date, type]) =>
    `<tr class="${name === 'Nexol.exe' ? 'selected' : ''}"><td><a href="#">${icon(pic)}${name}</a></td><td>${date}</td><td>${type}</td></tr>`
).join('');

// the last row carries the column lines down to the bottom of the list
document.getElementById('processes').innerHTML = processes.map(([pic, name, pid, status, user, cpu, mem, uac]) =>
    `<tr><td><div class="proc">${icon(pic)}${name}</div></td><td>${pid}</td><td>${status}</td><td>${user}</td><td>${cpu}</td><td>${mem} K</td><td>${uac}</td></tr>`
).join('') + '<tr class="filler">' + '<td></td>'.repeat(7) + '</tr>';
```
